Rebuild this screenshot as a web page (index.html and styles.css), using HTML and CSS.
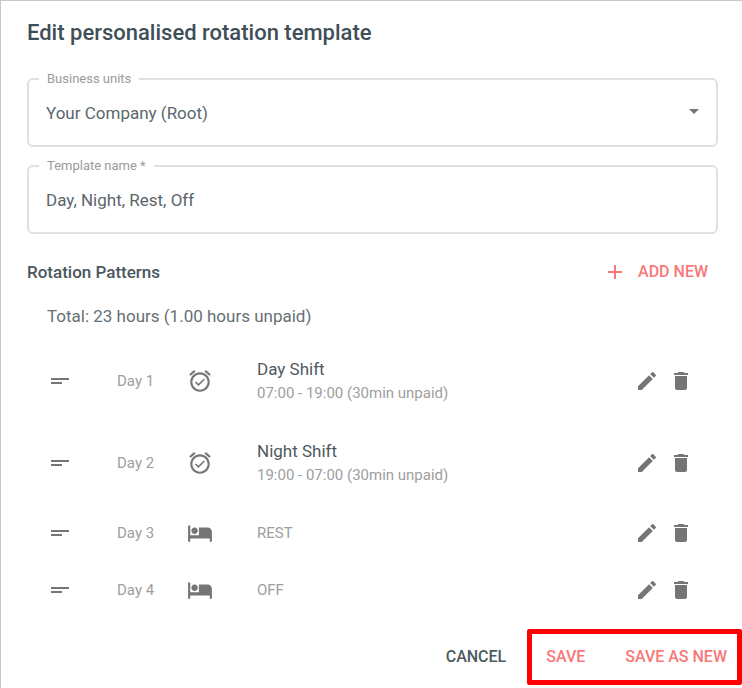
FILE: index.html
```html
<!DOCTYPE html>
<html lang="en">
<head>
<meta charset="utf-8">
<meta name="viewport" content="width=device-width, initial-scale=1">
<title>Edit personalised rotation template</title>
<link rel="stylesheet" href="styles.css">
</head>
<body>
<svg class="sprite" aria-hidden="true">
  <symbol id="handle" viewBox="0 0 24 24"><path d="M3 9h18v2H3zM3 13h11v2H3z"/></symbol>
  <symbol id="alarm" viewBox="0 0 24 24"><path d="M22 5.72l-4.6-3.86-1.29 1.53 4.6 3.86L22 5.72zM7.88 3.39L6.6 1.86 2 5.71l1.29 1.53 4.59-3.85zM12 4c-4.97 0-9 4.03-9 9s4.02 9 9 9c4.97 0 9-4.03 9-9s-4.03-9-9-9zm0 16c-3.87 0-7-3.13-7-7s3.13-7 7-7 7 3.13 7 7-3.13 7-7 7zm-1.46-5.47L8.41 12.4l-1.06 1.06 3.18 3.18 6-6-1.06-1.06-4.93 4.95z"/></symbol>
  <symbol id="bed" viewBox="0 0 24 24"><path d="M7 13c1.66 0 3-1.34 3-3S8.660 7 7 7s-3 1.340-3 3 1.340 3 3 3zm12-6h-8v7H3V5H1v15h2v-3h18v3h2v-9c0-2.210-1.790-4-4-4z"/></symbol>
  <symbol id="pencil" viewBox="0 0 24 24"><path d="M3 17.250V21h3.750L17.810 9.940l-3.750-3.750L3 17.250zM20.710 7.040c.39-.39.39-1.020 0-1.410l-2.340-2.340c-.39-.39-1.020-.39-1.410 0l-1.830 1.830 3.750 3.750 1.830-1.830z"/></symbol>
  <symbol id="trash" viewBox="0 0 24 24"><path d="M6 19c0 1.100.9 2 2 2h8c1.100 0 2-.9 2-2V7H6v12zM19 4h-3.500l-1-1h-5l-1 1H5v2h14V4z"/></symbol>
  <symbol id="plus" viewBox="0 0 24 24"><path d="M19 13h-6v6h-2v-6H5v-2h6V5h2v6h6v2z"/></symbol>
  <symbol id="caret" viewBox="0 0 24 24"><path d="M7 10l5 5 5-5z"/></symbol>
</svg>
<main class="dialog">
  <form class="content">
    <h1 class="title">Edit personalised rotation template</h1>

    <fieldset class="field">
      <legend><label for="unit">Business units</label></legend>
      <div class="select-box">
        <select id="unit" class="control"><option>Your Company (Root)</option></select>
        <svg class="icon caret"><use href="#caret"/></svg>
      </div>
    </fieldset>

    <fieldset class="field">
      <legend><label for="name">Template name *</label></legend>
      <input id="name" class="control" type="text" value="Day, Night, Rest, Off" required>
    </fieldset>

    <div class="section-head">
      <h2>Rotation Patterns</h2>
      <button type="button" class="button accent add"><svg class="icon"><use href="#plus"/></svg>ADD NEW</button>
    </div>
    <p class="total">Total: 23 hours (1.00 hours unpaid)</p>

    <ul class="days">
      <li class="day tall">
        <svg class="icon"><use href="#handle"/></svg>
        <span>Day 1</span>
        <svg class="icon kind"><use href="#alarm"/></svg>
        <div><div class="shift">Day Shift</div><div>07:00 - 19:00 (30min unpaid)</div></div>
        <button type="button" class="icon-button" aria-label="Edit day 1"><svg class="icon"><use href="#pencil"/></svg></button>
        <button type="button" class="icon-button" aria-label="Delete day 1"><svg class="icon"><use href="#trash"/></svg></button>
      </li>
      <li class="day tall">
        <svg class="icon"><use href="#handle"/></svg>
        <span>Day 2</span>
        <svg class="icon kind"><use href="#alarm"/></svg>
        <div><div class="shift">Night Shift</div><div>19:00 - 07:00 (30min unpaid)</div></div>
        <button type="button" class="icon-button" aria-label="Edit day 2"><svg class="icon"><use href="#pencil"/></svg></button>
        <button type="button" class="icon-button" aria-label="Delete day 2"><svg class="icon"><use href="#trash"/></svg></button>
      </li>
      <li class="day">
        <svg class="icon"><use href="#handle"/></svg>
        <span>Day 3</span>
        <svg class="icon kind"><use href="#bed"/></svg>
        <div>REST</div>
        <button type="button" class="icon-button" aria-label="Edit day 3"><svg class="icon"><use href="#pencil"/></svg></button>
        <button type="button" class="icon-button" aria-label="Delete day 3"><svg class="icon"><use href="#trash"/></svg></button>
      </li>
      <li class="day">
        <svg class="icon"><use href="#handle"/></svg>
        <span>Day 4</span>
        <svg class="icon kind"><use href="#bed"/></svg>
        <div>OFF</div>
        <button type="button" class="icon-button" aria-label="Edit day 4"><svg class="icon"><use href="#pencil"/></svg></button>
        <button type="button" class="icon-button" aria-label="Delete day 4"><svg class="icon"><use href="#trash"/></svg></button>
      </li>
    </ul>
  </form>
  <footer class="actions">
    <button type="button" class="button">CANCEL</button>
    <div class="highlight">
      <button type="button" class="button accent">SAVE</button>
      <button type="button" class="button accent">SAVE AS NEW</button>
    </div>
  </footer>
</main>
</body>
</html>
```

FILE: styles.css
```css
* { box-sizing: border-box; }

body {
  margin: 0;
  background: #fff;
  color: #4b575d;
  font: 16px/24px Roboto, "Liberation Sans", sans-serif;
}

h1, h2, p, ul { margin: 0; padding: 0; }

.sprite { display: none; }

.dialog {
  min-height: 100vh;
  border-top: 1px solid #c8c8c8;
  border-left: 1px solid #c8c8c8;
}

.content { padding: 16px 24px 0 26px; }

.title {
  margin-bottom: 22px;
  font-size: 22px;
  line-height: 32px;
  font-weight: 500;
  color: #404f57;
}

.icon {
  display: block;
  width: 24px;
  height: 24px;
  fill: currentColor;
}

.field {
  min-width: 0;
  margin: 0 0 11px;
  padding: 0;
  border: 2px solid #e0e0e0;
  border-radius: 6px;
}

.field legend {
  margin-left: 10px;
  padding: 0 8px;
  color: #9a9a9a;
  font-size: 13px;
  line-height: 16px;
}

.control {
  display: block;
  width: 100%;
  height: 58px;
  padding: 0 48px 6px 17px;
  border: 0;
  outline: 0;
  background: transparent;
  appearance: none;
  color: #5b666c;
  font: inherit;
  font-size: 17px;
}

.select-box { position: relative; }

.caret {
  position: absolute;
  top: 12px;
  right: 10px;
  color: #757575;
  pointer-events: none;
}

.section-head {
  display: flex;
  align-items: center;
  justify-content: space-between;
  margin-top: 26px;
}

h2 {
  font-size: 17px;
  line-height: 24px;
  font-weight: 500;
}

.button {
  padding: 0 10px;
  border: 0;
  background: none;
  color: #4b5a62;
  font: 500 16px/24px Roboto, "Liberation Sans", sans-serif;
}

.accent { color: #f87878; }

.add {
  display: flex;
  gap: 11px;
}

.total {
  padding: 20px 20px 12px;
  font-size: 17px;
  color: #666f74;
}

.days { list-style: none; }

.day {
  display: grid;
  grid-template-columns: 69px 70px 70px 1fr 34px 34px;
  align-items: center;
  min-height: 57px;
  padding: 0 15px 0 21px;
  color: #9e9e9e;
  font-size: 15px;
}

.day .icon { color: #757575; }

.tall { min-height: 82px; }

.day .kind {
  width: 26px;
  height: 26px;
}

.shift {
  color: #4f5a60;
  font-size: 17px;
}

.icon-button {
  padding: 0;
  border: 0;
  background: none;
}

.actions {
  display: flex;
  align-items: center;
  justify-content: flex-end;
  padding-top: 11px;
  gap: 11px;
}

.highlight {
  display: flex;
  justify-content: space-between;
  gap: 20px;
  padding: 11px 0 11px 4px;
  border: 5px solid #f00;
  border-radius: 2px;
}
```
